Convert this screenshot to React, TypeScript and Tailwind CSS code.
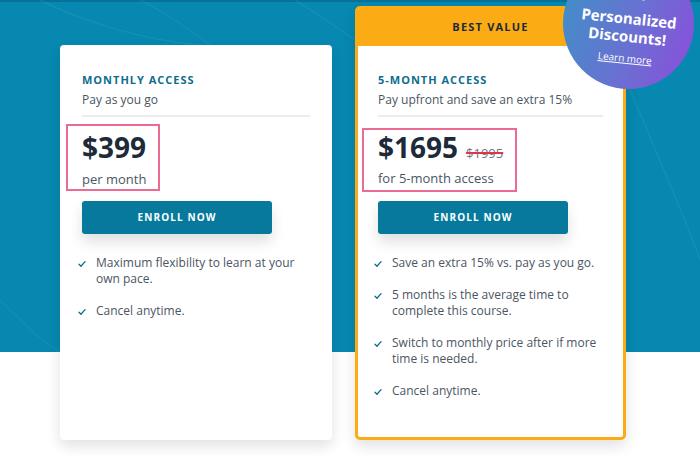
import React from "react";

type Plan = {
  title: string;
  subtitle: string;
  price: string;
  oldPrice?: string;
  period: string;
  features: string[];
  featured?: boolean;
};

const plans: Plan[] = [
  {
    title: "Monthly Access",
    subtitle: "Pay as you go",
    price: "$399",
    period: "per month",
    features: ["Maximum flexibility to learn at your own pace.", "Cancel anytime."],
  },
  {
    title: "5-Month Access",
    subtitle: "Pay upfront and save an extra 15%",
    price: "$1695",
    oldPrice: "$1995",
    period: "for 5-month access",
    features: [
      "Save an extra 15% vs. pay as you go.",
      "5 months is the average time to complete this course.",
      "Switch to monthly price after if more time is needed.",
      "Cancel anytime.",
    ],
    featured: true,
  },
];

function Check() {
  return (
    <svg width="8" height="8" viewBox="0 0 8 8" className="-ml-[4px] mt-[5px] shrink-0">
      <path d="M1 4.3 L3 6.2 L7 1.6" fill="none" stroke="#0b6f90" strokeWidth="1.3" strokeLinecap="round" strokeLinejoin="round" />
    </svg>
  );
}

function PlanBody({ plan }: { plan: Plan }) {
  const f = plan.featured;
  return (
    <div className={f ? "px-[20px] pt-[26px]" : "px-[22px] pt-[27px]"}>
      <h2 className="text-[11px] font-bold uppercase leading-[16px] tracking-[0.09em] text-[#0e6d8e]">{plan.title}</h2>
      <p className="mt-[4px] text-[12px] leading-[16px] text-[#4b5563]">{plan.subtitle}</p>
      <div className="mt-[7px] h-[2px] bg-[#ececec]" />
      <div
        className={`-ml-[16px] inline-block border-2 border-[#ec6b93] pl-[14px] pr-[12px] ${f ? "mt-[11px] pb-[3px] pt-0" : "mt-[7px] pb-[1px] pt-[4px]"}`}
      >
        <div className="flex items-baseline gap-[8px]">
          <span className="text-[28px] font-bold leading-[34px] text-[#1c2a3a]">{plan.price}</span>
          {plan.oldPrice && (
            <span className="text-[13px] text-[#6b7280] line-through decoration-[#e0344a] decoration-[1.5px]">{plan.oldPrice}</span>
          )}
        </div>
        <p className={`text-[13px] leading-[18px] text-[#4b5563] ${f ? "mt-[5px]" : "mt-[6px]"}`}>{plan.period}</p>
      </div>
      <button
        className={`block h-[33px] w-[190px] rounded-[3px] bg-[#06799c] text-[10px] font-bold uppercase tracking-[0.11em] text-white shadow-[0_8px_14px_rgba(0,0,0,0.12)] ${f ? "mt-[9px]" : "mt-[10px]"}`}
      >
        Enroll now
      </button>
      <ul className="mt-[21px] flex flex-col gap-[16px]">
        {plan.features.map((item) => (
          <li key={item} className="flex gap-[10px] text-[12px] leading-[16px] text-[#4b5563]">
            <Check />
            <span>{item}</span>
          </li>
        ))}
      </ul>
    </div>
  );
}

export default function App() {
  const [monthly, fiveMonth] = plans;
  return (
    <div
      className="relative h-[460px] w-[700px] overflow-hidden bg-[linear-gradient(to_bottom,#0788b1_0,#0788b1_352px,#ffffff_352px)]"
      style={{ fontFamily: '"Open Sans", "Noto Sans", sans-serif' }}
    >
      <div className="absolute inset-x-0 top-0 h-[2px] bg-[#06729a]" />
      <svg className="absolute left-0 top-0" width="700" height="352" viewBox="0 0 700 352">
        <path d="M40 0 C 80 20, 140 40, 200 45" stroke="rgba(255,255,255,0.06)" strokeWidth="1.5" fill="none" />
        <path d="M140 0 C 170 15, 190 30, 210 45" stroke="rgba(255,255,255,0.05)" strokeWidth="1.5" fill="none" />
        <path d="M295 0 C 320 15, 340 30, 355 40" stroke="rgba(255,255,255,0.05)" strokeWidth="1.5" fill="none" />
        <path d="M630 90 C 660 160, 690 230, 700 260" stroke="rgba(255,255,255,0.06)" strokeWidth="1.5" fill="none" />
        <path d="M0 300 C 20 320, 40 340, 60 352" stroke="rgba(255,255,255,0.05)" strokeWidth="1.5" fill="none" />
      </svg>

      <div className="relative flex items-start gap-[23px] pl-[60px] pt-[6px]">
        <div className="mt-[39px] h-[395px] w-[272px] rounded-[4px] bg-white shadow-[0_6px_14px_rgba(0,0,0,0.12)]">
          <PlanBody plan={monthly} />
        </div>
        <div className="h-[434px] w-[271px] overflow-hidden rounded-[5px] border-[3px] border-[#fbab14] bg-white shadow-[0_6px_14px_rgba(0,0,0,0.12)]">
          <div className="flex h-[37px] items-center justify-center bg-[#fbab14] text-[11px] font-bold uppercase tracking-[0.11em] text-[#1c2a3a]">
            Best value
          </div>
          <PlanBody plan={fiveMonth} />
        </div>
      </div>

      <div className="absolute left-[563px] top-[-42px] h-[131px] w-[131px] rounded-full bg-[linear-gradient(110deg,#3b93c6_0%,#6a70d2_55%,#8d4bdc_100%)]">
        <div className="flex h-full rotate-[6deg] flex-col items-center pt-[27px] text-white">
          <span className="mb-[7px] text-[14px] font-bold leading-[17px]">New</span>
          <span className="text-[15px] font-bold leading-[18px]">Personalized</span>
          <span className="text-[15px] font-bold leading-[18px]">Discounts!</span>
          <span className="mt-[6px] text-[10px] leading-[14px] underline">Learn more</span>
        </div>
      </div>
    </div>
  );
}
